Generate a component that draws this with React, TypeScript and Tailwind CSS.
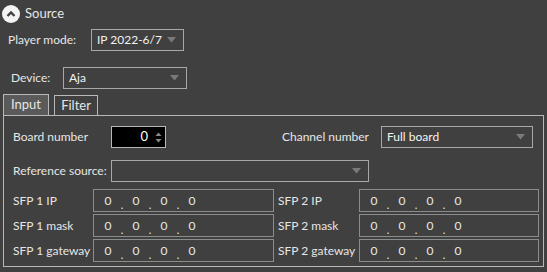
import React from "react";

const Arrow = () => (
  <svg width="9" height="6" viewBox="0 0 9 6" className="shrink-0">
    <path d="M0 0 H9 L4.5 5.5 Z" fill="#7a7a7a" />
  </svg>
);

interface ComboProps {
  value?: string;
  className: string;
}

const Combo: React.FC<ComboProps> = ({ value, className }) => (
  <div
    className={`flex h-[22px] items-center justify-between border border-[#a8a8a8] pl-[5px] pr-[7px] text-[#f2f2f2] ${className}`}
  >
    <span className="whitespace-nowrap">{value}</span>
    <Arrow />
  </div>
);

const IpBox: React.FC<{ className: string }> = ({ className }) => (
  <div className={`flex h-[23px] items-center border border-[#8c8c8c] pl-[9px] text-[#e8e8e8] ${className}`}>
    {[0, 1, 2, 3].map((i) => (
      <React.Fragment key={i}>
        <span className="w-[10px] text-center">0</span>
        {i < 3 && <span className="w-[18px] translate-y-[4px] text-center text-[11px] leading-none">.</span>}
      </React.Fragment>
    ))}
  </div>
);

const App: React.FC = () => {
  const sfpRows = [
    ["SFP 1 IP", "SFP 2 IP"],
    ["SFP 1 mask", "SFP 2 mask"],
    ["SFP 1 gateway", "SFP 2 gateway"],
  ];

  return (
    <div className="h-[272px] w-[547px] overflow-hidden whitespace-nowrap bg-[#404040] text-[12px] text-[#e6e6e6] [font-family:Lato,'Noto_Sans',sans-serif]">
      {/* header */}
      <div className="flex h-[26px] items-center gap-[5px] pl-[2px] pt-[1px]">
        <div className="flex h-[18px] w-[18px] items-center justify-center rounded-full bg-[#f4f4f4]">
          <svg width="10" height="8" viewBox="0 0 10 8">
            <path d="M1.5 6 L5 2.5 L8.5 6" stroke="#404040" strokeWidth="2.4" fill="none" />
          </svg>
        </div>
        <span className="text-[13px]">Source</span>
      </div>

      <div className="mt-[3px] flex items-center">
        <span className="w-[91px] pl-[8px]">Player mode:</span>
        <Combo value="IP 2022-6/7" className="w-[93px]" />
      </div>

      <div className="mt-[16px] flex items-center">
        <span className="w-[63px] pl-[11px]">Device:</span>
        <Combo value="Aja" className="w-[124px]" />
      </div>

      {/* tabs */}
      <div className="ml-[3px] mt-[5px] flex h-[21px] items-end">
        <div className="flex h-[21px] w-[46px] items-center justify-center border border-b-0 border-[#b8b8b8] bg-[#5a5a5a] text-[13px]">
          Input
        </div>
        <div className="ml-[5px] flex h-[20px] w-[44px] items-center justify-center border border-b-0 border-[#b8b8b8] text-[13px]">
          Filter
        </div>
      </div>

      {/* panel */}
      <div className="ml-[3px] w-[541px] border border-[#b8b8b8] pb-[4px] pl-[9px] pt-[10px]">
        <div className="flex h-[22px] items-center">
          <span className="w-[98px]">Board number</span>
          <div className="flex h-[22px] w-[55px] items-center justify-end border border-[#b8b8b8] bg-black pr-[3px]">
            <span className="mr-[7px] text-[13px] text-white">0</span>
            <svg width="7" height="13" viewBox="0 0 7 13">
              <path d="M0.5 5 L3.5 1.5 L6.5 5 Z" fill="#8a8a8a" />
              <path d="M0.5 8 L3.5 11.5 L6.5 8 Z" fill="#8a8a8a" />
            </svg>
          </div>
          <span className="ml-[116px] w-[99px]">Channel number</span>
          <Combo value="Full board" className="w-[152px]" />
        </div>

        <div className="mt-[12px] flex h-[22px] items-center">
          <span className="w-[98px]">Reference source:</span>
          <Combo className="w-[258px]" />
        </div>

        <div className="mt-[7px] flex flex-col gap-[2px]">
          {sfpRows.map(([a, b]) => (
            <div key={a} className="flex items-center">
              <span className="w-[80px]">{a}</span>
              <IpBox className="w-[181px]" />
              <span className="w-[85px] pl-[4px]">{b}</span>
              <IpBox className="w-[180px]" />
            </div>
          ))}
        </div>
      </div>
    </div>
  );
};

export default App;
